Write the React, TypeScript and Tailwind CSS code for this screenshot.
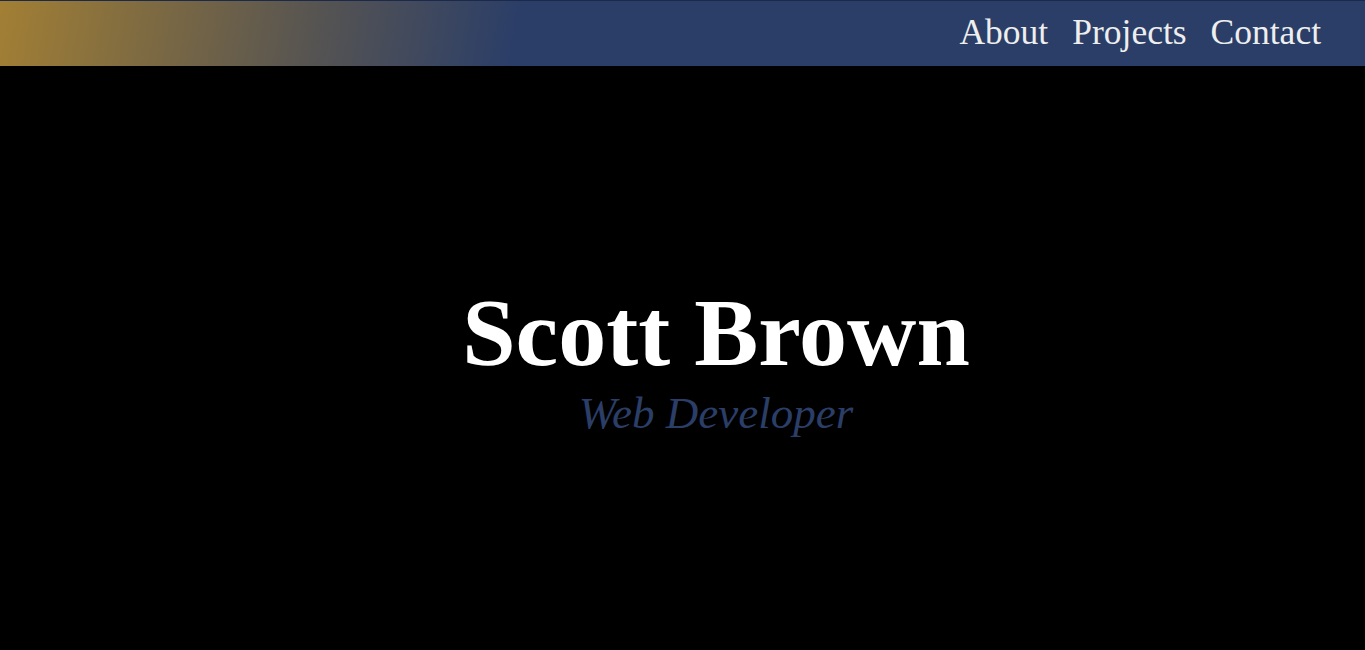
export default function App() {
  const serif = { fontFamily: '"Liberation Serif", "Times New Roman", serif' };
  return (
    <div className="min-h-[650px] bg-black" style={serif}>
      <header className="h-[66px] border-t border-[#1b2a4a] bg-[linear-gradient(100deg,#a27f34_0%,#5a5650_22%,#2b3e68_38%,#2b3e68_100%)] flex items-center justify-end pr-[44px] pb-[2px]">
        <nav className="flex gap-[24px] text-[35.5px] text-[#eeeeee] leading-none">
          <a href="#">About</a>
          <a href="#">Projects</a>
          <a href="#">Contact</a>
        </nav>
      </header>
      <main className="flex flex-col items-center pt-[219px] pl-[67px]">
        <h1 className="text-[96px] font-bold text-white leading-none">Scott Brown</h1>
        <p className="text-[45px] italic text-[#2b3e68] leading-none mt-[10px]">Web Developer</p>
      </main>
    </div>
  );
}
